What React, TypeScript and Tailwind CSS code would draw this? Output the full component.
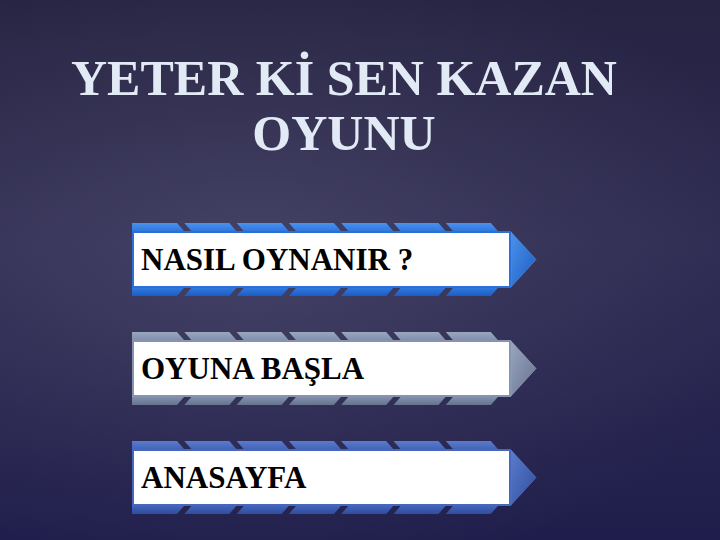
import React from "react";

type Theme = {
  id: string;
  light: string;
  mid: string;
  dark: string;
  border: string;
};

const themes: Record<string, Theme> = {
  blue: { id: "blue", light: "#4b92ec", mid: "#2f78de", dark: "#1d5cc2", border: "#2b70d8" },
  slate: { id: "slate", light: "#9aa6c0", mid: "#8290ac", dark: "#66738f", border: "#8794b0" },
  royal: { id: "royal", light: "#5b7ccc", mid: "#4364ba", dark: "#2f4d9e", border: "#4767bb" },
};

const SEGMENTS = [0, 1, 2, 3, 4, 5, 6];
const PERIOD = 52.3;
const SEG = 45;
const SLANT = 7;

function Strip({ theme, side }: { theme: Theme; side: "top" | "bottom" }) {
  const gid = `strip-${theme.id}-${side}`;
  return (
    <svg width="379" height="8" viewBox="0 0 379 8" className="block">
      <defs>
        <linearGradient id={gid} x1="0" y1="0" x2="0" y2="1">
          <stop offset="0" stopColor={side === "top" ? theme.light : theme.mid} />
          <stop offset="1" stopColor={side === "top" ? theme.mid : theme.dark} />
        </linearGradient>
      </defs>
      {SEGMENTS.map((i) => {
        const x = i * PERIOD;
        const pts =
          side === "top"
            ? `${i === 0 ? 0 : x},0 ${x + SEG},0 ${x + SEG + SLANT},8 ${i === 0 ? 0 : x + SLANT},8`
            : `${i === 0 ? 0 : x + SLANT},0 ${x + SEG + SLANT},0 ${x + SEG},8 ${i === 0 ? 0 : x},8`;
        return <polygon key={i} points={pts} fill={`url(#${gid})`} />;
      })}
    </svg>
  );
}

function Arrow({ theme }: { theme: Theme }) {
  const gid = `arrow-${theme.id}`;
  return (
    <svg width="26" height="57" viewBox="0 0 26 57" className="block">
      <defs>
        <linearGradient id={gid} x1="0" y1="0" x2="1" y2="1">
          <stop offset="0" stopColor={theme.light} />
          <stop offset="1" stopColor={theme.dark} />
        </linearGradient>
      </defs>
      <polygon points="0,1 25,28.5 0,56" fill={`url(#${gid})`} stroke={theme.light} strokeWidth="1" strokeOpacity="0.6" />
    </svg>
  );
}

function MenuItem({ label, theme }: { label: string; theme: Theme }) {
  return (
    <div className="flex flex-col">
      <Strip theme={theme} side="top" />
      <div className="flex">
        <div
          className="w-[379px] h-[57px] bg-white border-2 flex items-center pl-[7px]"
          style={{ borderColor: theme.border }}
        >
          <span className="text-[31px] leading-none font-bold text-black font-['Liberation_Serif',serif]">
            {label}
          </span>
        </div>
        <Arrow theme={theme} />
      </div>
      <Strip theme={theme} side="bottom" />
    </div>
  );
}

export default function App() {
  return (
    <div className="w-[720px] h-[540px] overflow-hidden bg-[linear-gradient(180deg,#2c2844_0%,#37345a_45%,#232150_100%)]">
      <div className="w-full h-full bg-[radial-gradient(ellipse_75%_60%_at_35%_48%,rgba(72,70,104,0.75)_0%,rgba(60,58,92,0.35)_50%,rgba(20,18,60,0.25)_100%)]">
        <div className="w-[688px] pt-[51px] text-center font-['Liberation_Serif',serif] font-bold text-[50px] leading-[55px] text-[#e2eaf5]">
          <div>YETER Kİ SEN KAZAN</div>
          <div>OYUNU</div>
        </div>
        <div className="flex flex-col gap-[36px] pl-[132px] pt-[62px]">
          <MenuItem label="NASIL OYNANIR ?" theme={themes.blue} />
          <MenuItem label="OYUNA BAŞLA" theme={themes.slate} />
          <MenuItem label="ANASAYFA" theme={themes.royal} />
        </div>
      </div>
    </div>
  );
}
